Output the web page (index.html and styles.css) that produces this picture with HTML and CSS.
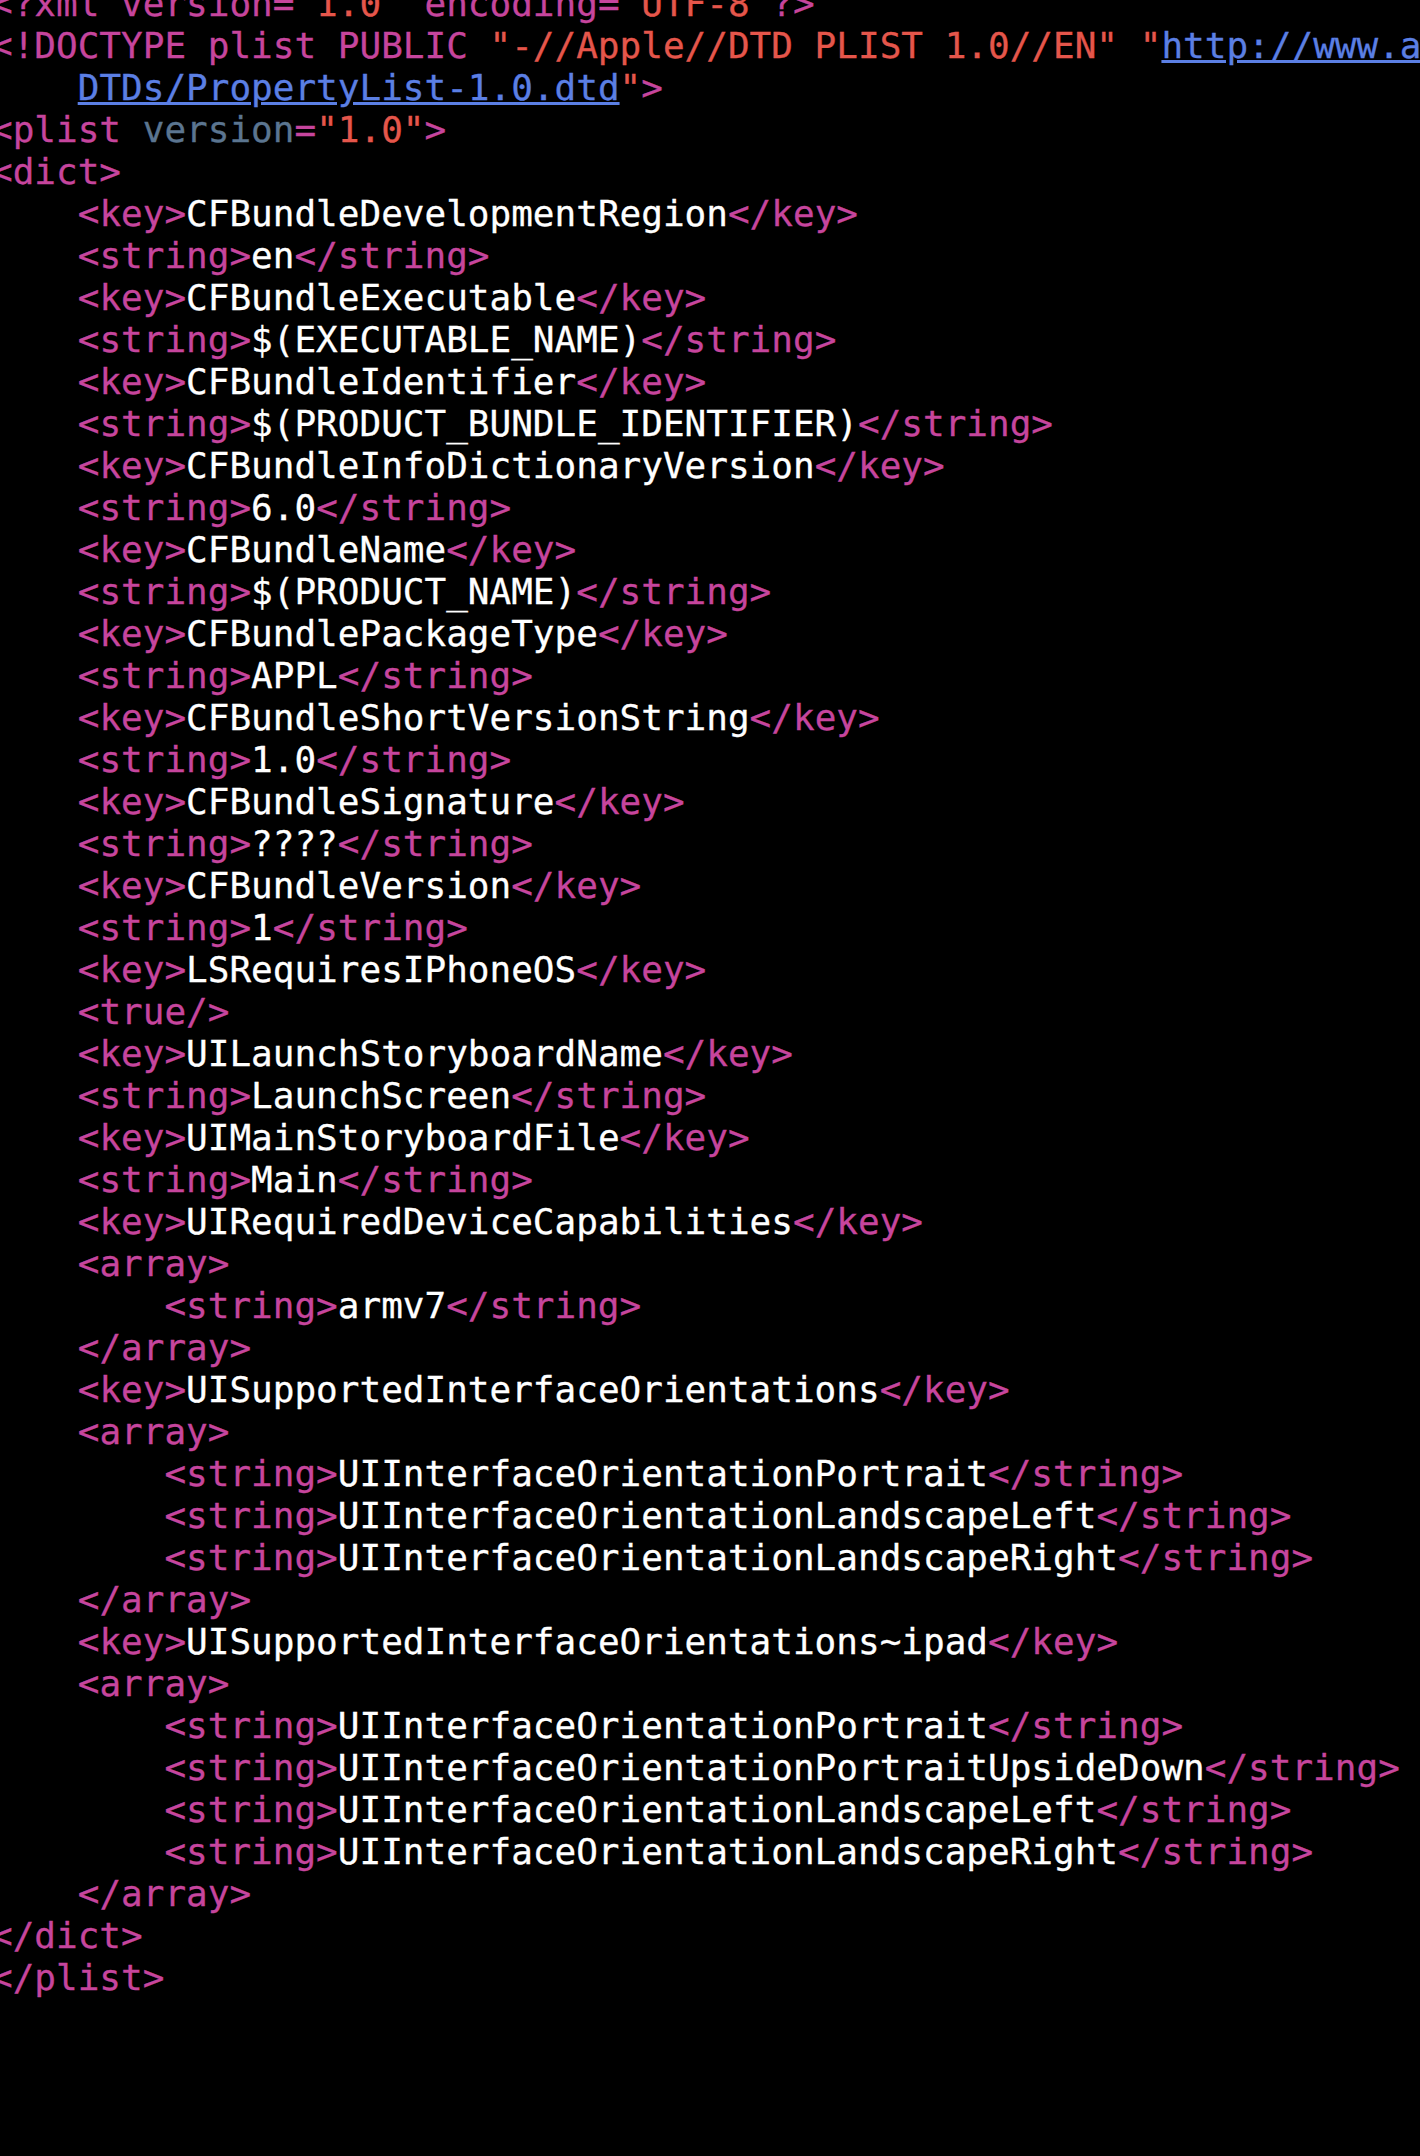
FILE: index.html
```html
<!DOCTYPE html>
<html lang="en">
<head>
	<meta charset="UTF-8">
	<title>Info.plist</title>
	<link rel="stylesheet" href="styles.css">
</head>
<body>
	<div class="editor">
<pre class="code"><span class="t">&lt;?xml version=</span><span class="s">"1.0"</span><span class="t"> encoding=</span><span class="s">"UTF-8"</span><span class="t">?&gt;</span>
<span class="t">&lt;!DOCTYPE plist PUBLIC </span><span class="s">"-//Apple//DTD PLIST 1.0//EN"</span> <span class="s">"</span><span class="u">http://www.apple.com/</span>
    <span class="u">DTDs/PropertyList-1.0.dtd</span><span class="s">"</span><span class="t">&gt;</span>
<span class="t">&lt;plist </span><span class="a">version</span><span class="t">=</span><span class="s">"1.0"</span><span class="t">&gt;</span>
<span class="t">&lt;dict&gt;</span>
    <span class="t">&lt;key&gt;</span>CFBundleDevelopmentRegion<span class="t">&lt;/key&gt;</span>
    <span class="t">&lt;string&gt;</span>en<span class="t">&lt;/string&gt;</span>
    <span class="t">&lt;key&gt;</span>CFBundleExecutable<span class="t">&lt;/key&gt;</span>
    <span class="t">&lt;string&gt;</span>$(EXECUTABLE_NAME)<span class="t">&lt;/string&gt;</span>
    <span class="t">&lt;key&gt;</span>CFBundleIdentifier<span class="t">&lt;/key&gt;</span>
    <span class="t">&lt;string&gt;</span>$(PRODUCT_BUNDLE_IDENTIFIER)<span class="t">&lt;/string&gt;</span>
    <span class="t">&lt;key&gt;</span>CFBundleInfoDictionaryVersion<span class="t">&lt;/key&gt;</span>
    <span class="t">&lt;string&gt;</span>6.0<span class="t">&lt;/string&gt;</span>
    <span class="t">&lt;key&gt;</span>CFBundleName<span class="t">&lt;/key&gt;</span>
    <span class="t">&lt;string&gt;</span>$(PRODUCT_NAME)<span class="t">&lt;/string&gt;</span>
    <span class="t">&lt;key&gt;</span>CFBundlePackageType<span class="t">&lt;/key&gt;</span>
    <span class="t">&lt;string&gt;</span>APPL<span class="t">&lt;/string&gt;</span>
    <span class="t">&lt;key&gt;</span>CFBundleShortVersionString<span class="t">&lt;/key&gt;</span>
    <span class="t">&lt;string&gt;</span>1.0<span class="t">&lt;/string&gt;</span>
    <span class="t">&lt;key&gt;</span>CFBundleSignature<span class="t">&lt;/key&gt;</span>
    <span class="t">&lt;string&gt;</span>????<span class="t">&lt;/string&gt;</span>
    <span class="t">&lt;key&gt;</span>CFBundleVersion<span class="t">&lt;/key&gt;</span>
    <span class="t">&lt;string&gt;</span>1<span class="t">&lt;/string&gt;</span>
    <span class="t">&lt;key&gt;</span>LSRequiresIPhoneOS<span class="t">&lt;/key&gt;</span>
    <span class="t">&lt;true/&gt;</span>
    <span class="t">&lt;key&gt;</span>UILaunchStoryboardName<span class="t">&lt;/key&gt;</span>
    <span class="t">&lt;string&gt;</span>LaunchScreen<span class="t">&lt;/string&gt;</span>
    <span class="t">&lt;key&gt;</span>UIMainStoryboardFile<span class="t">&lt;/key&gt;</span>
    <span class="t">&lt;string&gt;</span>Main<span class="t">&lt;/string&gt;</span>
    <span class="t">&lt;key&gt;</span>UIRequiredDeviceCapabilities<span class="t">&lt;/key&gt;</span>
    <span class="t">&lt;array&gt;</span>
        <span class="t">&lt;string&gt;</span>armv7<span class="t">&lt;/string&gt;</span>
    <span class="t">&lt;/array&gt;</span>
    <span class="t">&lt;key&gt;</span>UISupportedInterfaceOrientations<span class="t">&lt;/key&gt;</span>
    <span class="t">&lt;array&gt;</span>
        <span class="t">&lt;string&gt;</span>UIInterfaceOrientationPortrait<span class="t">&lt;/string&gt;</span>
        <span class="t">&lt;string&gt;</span>UIInterfaceOrientationLandscapeLeft<span class="t">&lt;/string&gt;</span>
        <span class="t">&lt;string&gt;</span>UIInterfaceOrientationLandscapeRight<span class="t">&lt;/string&gt;</span>
    <span class="t">&lt;/array&gt;</span>
    <span class="t">&lt;key&gt;</span>UISupportedInterfaceOrientations~ipad<span class="t">&lt;/key&gt;</span>
    <span class="t">&lt;array&gt;</span>
        <span class="t">&lt;string&gt;</span>UIInterfaceOrientationPortrait<span class="t">&lt;/string&gt;</span>
        <span class="t">&lt;string&gt;</span>UIInterfaceOrientationPortraitUpsideDown<span class="t">&lt;/string&gt;</span>
        <span class="t">&lt;string&gt;</span>UIInterfaceOrientationLandscapeLeft<span class="t">&lt;/string&gt;</span>
        <span class="t">&lt;string&gt;</span>UIInterfaceOrientationLandscapeRight<span class="t">&lt;/string&gt;</span>
    <span class="t">&lt;/array&gt;</span>
<span class="t">&lt;/dict&gt;</span>
<span class="t">&lt;/plist&gt;</span></pre>
	</div>
</body>
</html>
```

FILE: styles.css
```css
html,
body {
	margin: 0;
	background: #000;
}

body {
	min-height: 2156px;
	overflow: hidden;
}

.editor {
	width: 1420px;
	overflow: hidden;
}

.code {
	margin: -17px 0 0 -9px;
	font: 36px/42px "DejaVu Sans Mono", "Liberation Mono", monospace;
	color: #fff;
	white-space: pre;
	-webkit-text-stroke: 0.3px currentColor;
}

/* tags */
.t {
	color: #c6459d;
}

/* attribute names */
.a {
	color: #5b7590;
}

/* quoted values */
.s {
	color: #e5564b;
}

/* links */
.u {
	color: #5b7fe4;
	text-decoration: underline;
}
```
